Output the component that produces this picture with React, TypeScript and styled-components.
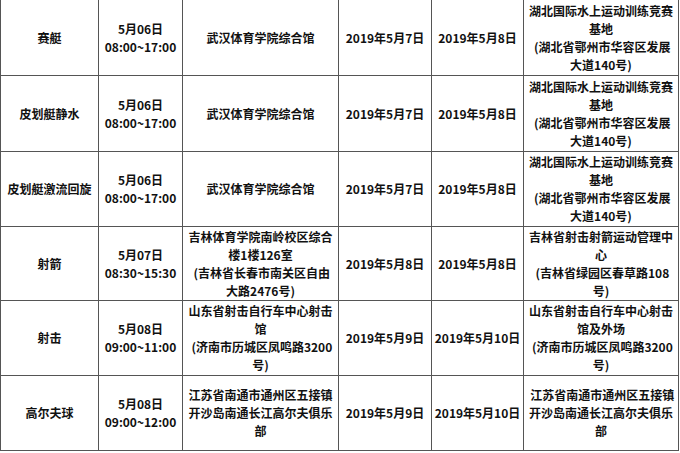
import styled, { createGlobalStyle } from 'styled-components';

const GlobalStyle = createGlobalStyle`
	html, body {
		margin: 0;
		padding: 0;
		background: #fff;
	}
	body {
		font-family: 'Noto Sans CJK SC', 'Noto Sans', sans-serif;
		overflow: hidden;
	}
`;

const Sheet = styled.table`
	margin-top: -1px;
	border-collapse: collapse;
	table-layout: fixed;
	width: 679px;
	color: #111;
	font-size: 12px;
	font-weight: 700;
	line-height: 18px;
`;

const Row = styled.tr<{ $h: number }>`
	height: ${(p) => p.$h}px;
`;

const Cell = styled.td`
	border: 1px solid #555;
	padding: 0 2px;
	text-align: center;
	vertical-align: middle;
	white-space: nowrap;
	overflow: hidden;
`;

const Line = styled.div`
	display: block;
`;

const widths = [98, 84, 156, 93, 92, 155];

type Entry = {
	sport: string;
	time: string[];
	venue: string[];
	arrive: string;
	leave: string;
	hotel: string[];
	h: number;
};

const hubei = ['湖北国际水上运动训练竞赛', '基地', ' (湖北省鄂州市华容区发展', '大道140号)'];

const rows: Entry[] = [
	{ sport: '赛艇', time: ['5月06日', '08:00~17:00'], venue: ['武汉体育学院综合馆'], arrive: '2019年5月7日', leave: '2019年5月8日', hotel: hubei, h: 76 },
	{ sport: '皮划艇静水', time: ['5月06日', '08:00~17:00'], venue: ['武汉体育学院综合馆'], arrive: '2019年5月7日', leave: '2019年5月8日', hotel: hubei, h: 76 },
	{ sport: '皮划艇激流回旋', time: ['5月06日', '08:00~17:00'], venue: ['武汉体育学院综合馆'], arrive: '2019年5月7日', leave: '2019年5月8日', hotel: hubei, h: 75 },
	{
		sport: '射箭',
		time: ['5月07日', '08:30~15:30'],
		venue: ['吉林体育学院南岭校区综合', '楼1楼126室', ' (吉林省长春市南关区自由', '大路2476号)'],
		arrive: '2019年5月8日',
		leave: '2019年5月8日',
		hotel: ['吉林省射击射箭运动管理中', '心', ' (吉林省绿园区春草路108', '号)'],
		h: 74,
	},
	{
		sport: '射击',
		time: ['5月08日', '09:00~11:00'],
		venue: ['山东省射击自行车中心射击', '馆', ' (济南市历城区凤鸣路3200', '号)'],
		arrive: '2019年5月9日',
		leave: '2019年5月10日',
		hotel: ['山东省射击自行车中心射击', '馆及外场', ' (济南市历城区凤鸣路3200', '号)'],
		h: 75,
	},
	{
		sport: '高尔夫球',
		time: ['5月08日', '09:00~12:00'],
		venue: ['江苏省南通市通州区五接镇', '开沙岛南通长江高尔夫俱乐', '部'],
		arrive: '2019年5月9日',
		leave: '2019年5月10日',
		hotel: [' 江苏省南通市通州区五接镇', '开沙岛南通长江高尔夫俱乐', '部'],
		h: 75,
	},
];

const Lines = ({ items }: { items: string[] }) => (
	<>
		{items.map((t, i) => (
			<Line key={i}>{t.startsWith(' ') ? '\u00a0' + t.slice(1) : t}</Line>
		))}
	</>
);

const App = () => {
	return (
		<>
			<GlobalStyle />
			<Sheet>
				<colgroup>
					{widths.map((w, i) => (
						<col key={i} style={{ width: w }} />
					))}
				</colgroup>
				<tbody>
					{rows.map((r) => (
						<Row key={r.sport} $h={r.h}>
							<Cell>{r.sport}</Cell>
							<Cell>
								<Lines items={r.time} />
							</Cell>
							<Cell>
								<Lines items={r.venue} />
							</Cell>
							<Cell>{r.arrive}</Cell>
							<Cell>{r.leave}</Cell>
							<Cell>
								<Lines items={r.hotel} />
							</Cell>
						</Row>
					))}
				</tbody>
			</Sheet>
		</>
	);
};

export default App;
